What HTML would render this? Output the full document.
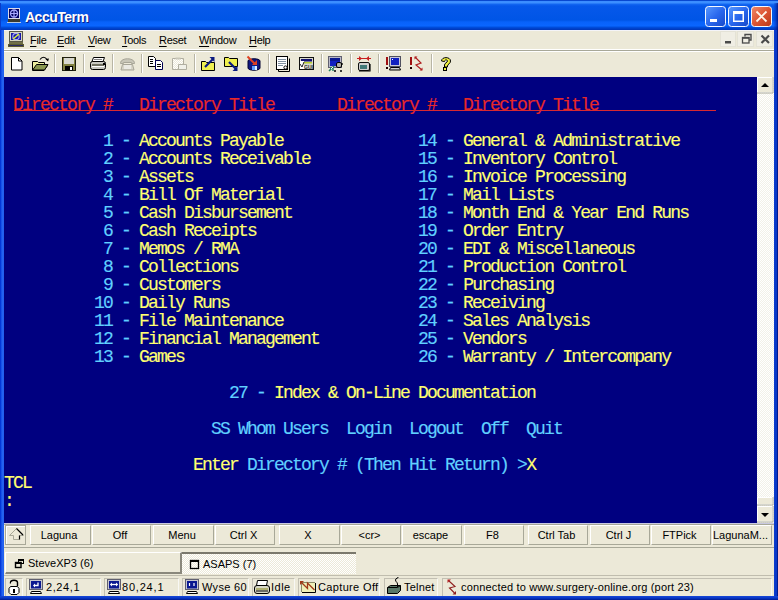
<!DOCTYPE html>
<html><head><meta charset="utf-8">
<style>
*{margin:0;padding:0;box-sizing:border-box}
html,body{width:778px;height:600px;overflow:hidden;background:#0842D6;font-family:"Liberation Sans",sans-serif}
.abs{position:absolute}
#title{left:0;top:0;width:778px;height:30px;background:linear-gradient(#0848D0 0px,#0848D0 1px,#3A8CFF 1px,#3D90FF 3px,#1468F2 4px,#0658EA 6px,#0055E6 20px,#0862FA 22px,#0A66FF 26px,#0050E0 27px,#003DC4 29px,#0036B8 30px)}
#title .t{left:25px;top:9px;color:#fff;font-weight:bold;font-size:14px;text-shadow:1px 1px #0A1E8A;letter-spacing:-0.5px}
#lframe{left:0;top:30px;width:4px;height:570px;background:linear-gradient(90deg,#0030D0,#0840E0 1px,#2563F0 2px,#2060EE 4px)}
#rframe{left:774px;top:30px;width:4px;height:570px;background:linear-gradient(90deg,#1040D0,#0838C8 1px,#0838C8 3px,#001A90 3px)}
#bframe{left:0;top:596px;width:778px;height:4px;background:linear-gradient(#1848D8,#0838C8 2px,#001A90 4px)}
#menubar{left:4px;top:30px;width:770px;height:20px;background:#ECE9D8;border-top:1px solid #F4F4F8;border-bottom:1px solid #fff}
#toolbar{left:4px;top:50px;width:770px;height:27px;background:#ECE9D8;border-top:1px solid #A8A898;box-shadow:inset 0 1px #fff}
#term{left:4px;top:77px;width:753px;height:446px;background:#000080;overflow:hidden}
#scroll{left:757px;top:77px;width:17px;height:446px;background:#F5F4EE}
#fkeys{left:4px;top:523px;width:770px;height:25px;background:#ECE9D8;border-top:1px solid #C8C8E0;box-shadow:inset 0 1px #A8A898}
#tabs{left:4px;top:547px;width:770px;height:29px;background:#ECE9D8;border-top:1px solid #A8A898}
#status{left:4px;top:576px;width:770px;height:20px;background:#ECE9D8}
.row{position:absolute;left:0px;height:18px;font-family:"Liberation Mono",monospace;font-size:18px;letter-spacing:-1.8px;line-height:18px;white-space:pre;color:#FFFF70;-webkit-text-stroke:0.15px currentColor}
.c{color:#60D0FF}.y{color:#FFFF70}.r{color:#E82828}
.menu span{position:absolute;top:3px;font-size:11px;color:#000;font-family:"Liberation Sans",sans-serif;letter-spacing:-0.3px}
.menu u{text-decoration-thickness:1px;text-underline-offset:2px}
.sep{position:absolute;top:3px;width:2px;height:19px;border-left:1px solid #B8B5A5;border-right:1px solid #fff}
.fk{position:absolute;top:1px;height:20px;width:60px;background:#ECE9D8;border:1px solid #A8A898;border-top-color:#fff;border-left-color:#fff;font-size:11px;text-align:center;line-height:18px;color:#000;padding-right:3px;white-space:nowrap}
.sp{position:absolute;top:2px;height:18px;border-left:1px solid #C2BFB2;border-top:1px solid #C2BFB2;border-right:1px solid #F8F8F4}
.sp span{position:absolute;top:2px;font-size:11px;color:#000;white-space:nowrap}
</style></head><body>
<div id="title" class="abs"><div class="t abs">AccuTerm</div></div>
<div id="lframe" class="abs"></div><div class="abs" style="left:774px;top:3px;width:4px;height:27px;background:linear-gradient(90deg,rgba(0,40,180,0.15),rgba(0,30,160,0.45) 2px,rgba(0,10,110,0.75))"></div><div class="abs" style="left:0;top:3px;width:1px;height:27px;background:#0A3CC8"></div><div id="rframe" class="abs"></div><div id="bframe" class="abs"></div>
<div id="menubar" class="abs menu">
<span style="left:26px"><u>F</u>ile</span><span style="left:53px"><u>E</u>dit</span><span style="left:84px"><u>V</u>iew</span><span style="left:118px"><u>T</u>ools</span><span style="left:155px"><u>R</u>eset</span><span style="left:195px"><u>W</u>indow</span><span style="left:245px"><u>H</u>elp</span>
</div>
<div id="toolbar" class="abs">
<div class="sep" style="left:50px"></div><div class="sep" style="left:79px"></div><div class="sep" style="left:108px"></div><div class="sep" style="left:137px"></div><div class="sep" style="left:190px"></div><div class="sep" style="left:264px"></div><div class="sep" style="left:317px"></div><div class="sep" style="left:346px"></div><div class="sep" style="left:374px"></div><div class="sep" style="left:427px"></div>
</div>
<div id="term" class="abs">
<div class="row r" style="top:19px"> Directory #   Directory Title       Directory #   Directory Title</div>
<div class="abs" style="left:10px;top:33px;width:702px;height:1px;background:#D82830"></div>
<div class="row" style="top:55px"><span class="c">           1 - </span>Accounts Payable<span class="c">               14 - </span>General &amp; Administrative</div>
<div class="row" style="top:73px"><span class="c">           2 - </span>Accounts Receivable<span class="c">            15 - </span>Inventory Control</div>
<div class="row" style="top:91px"><span class="c">           3 - </span>Assets<span class="c">                         16 - </span>Invoice Processing</div>
<div class="row" style="top:109px"><span class="c">           4 - </span>Bill Of Material<span class="c">               17 - </span>Mail Lists</div>
<div class="row" style="top:127px"><span class="c">           5 - </span>Cash Disbursement<span class="c">              18 - </span>Month End &amp; Year End Runs</div>
<div class="row" style="top:145px"><span class="c">           6 - </span>Cash Receipts<span class="c">                  19 - </span>Order Entry</div>
<div class="row" style="top:163px"><span class="c">           7 - </span>Memos / RMA<span class="c">                    20 - </span>EDI &amp; Miscellaneous</div>
<div class="row" style="top:181px"><span class="c">           8 - </span>Collections<span class="c">                    21 - </span>Production Control</div>
<div class="row" style="top:199px"><span class="c">           9 - </span>Customers<span class="c">                      22 - </span>Purchasing</div>
<div class="row" style="top:217px"><span class="c">          10 - </span>Daily Runs<span class="c">                     23 - </span>Receiving</div>
<div class="row" style="top:235px"><span class="c">          11 - </span>File Maintenance<span class="c">               24 - </span>Sales Analysis</div>
<div class="row" style="top:253px"><span class="c">          12 - </span>Financial Management<span class="c">           25 - </span>Vendors</div>
<div class="row" style="top:271px"><span class="c">          13 - </span>Games<span class="c">                          26 - </span>Warranty / Intercompany</div>
<div class="row" style="top:307px"><span class="c">                         27 - </span>Index &amp; On-Line Documentation</div>
<div class="row c" style="top:343px">                       SS Whom Users  Login  Logout  Off  Quit</div>
<div class="row" style="top:379px">                     Enter <span class="c">Directory # (Then Hit Return) &gt;</span>X</div>
<div class="row" style="top:397px">TCL</div>
<div class="row" style="top:415px">:</div>
</div>
<div id="fkeys" class="abs">
<div class="fk" style="left:1px;width:21px;border-color:#A8A898;box-shadow:inset 1px 1px #fff"></div>
<div class="fk" style="left:26px;width:61px">Laguna</div><div class="fk" style="left:88px;width:59px">Off</div><div class="fk" style="left:149px;width:61px">Menu</div><div class="fk" style="left:211px;width:60px">Ctrl X</div><div class="fk" style="left:275px;width:61px">X</div><div class="fk" style="left:337px;width:60px">&lt;cr&gt;</div><div class="fk" style="left:398px;width:60px">escape</div><div class="fk" style="left:460px;width:60px">F8</div><div class="fk" style="left:524px;width:60px">Ctrl Tab</div><div class="fk" style="left:586px;width:60px">Ctrl J</div><div class="fk" style="left:647px;width:60px">FTPick</div><div class="fk" style="left:708px;width:60px">LagunaM...</div>
</div>
<div id="tabs" class="abs">
<div class="abs" style="left:1px;top:4px;width:177px;height:22px;border-top:1px solid #fff;border-left:1px solid #fff;border-right:2px solid #8A887C;border-bottom:2px solid #8A887C;background:#ECE9D8"></div>
<div class="abs" style="left:178px;top:4px;width:174px;height:22px;border-top:2px solid #7A786C;"><svg width="174" height="20" style="display:block"><rect width="174" height="20" fill="url(#dith)"/></svg></div>
<div class="abs" style="left:24px;top:9px;font-size:11px;color:#000;white-space:nowrap">SteveXP3 (6)</div>
<div class="abs" style="left:199px;top:10px;font-size:11px;color:#000;white-space:nowrap">ASAPS (7)</div>
</div>
<div class="abs" style="left:4px;top:575px;width:770px;height:1px;background:#C0BDAE"></div>
<div id="status" class="abs">
<div class="sp" style="left:1px;width:18px"></div>
<div class="sp" style="left:22px;width:75px"><span style="left:19px;letter-spacing:0.6px">2,24,1</span></div>
<div class="sp" style="left:100px;width:75px"><span style="left:17px;letter-spacing:0.8px">80,24,1</span></div>
<div class="sp" style="left:178px;width:67px"><span style="left:19px;letter-spacing:0.3px">Wyse 60</span></div>
<div class="sp" style="left:248px;width:43px"><span style="left:18px;letter-spacing:0.5px">Idle</span></div>
<div class="sp" style="left:294px;width:82px"><span style="left:19px;letter-spacing:0.35px">Capture Off</span></div>
<div class="sp" style="left:380px;width:54px"><span style="left:19px;letter-spacing:0.2px">Telnet</span></div>
<div class="sp" style="left:438px;width:330px"><span style="left:18px;letter-spacing:0.16px">connected to www.surgery-online.org (port 23)</span></div>
</div>
<svg class="abs" style="left:0;top:0" width="778" height="600" viewBox="0 0 778 600">
<defs>
<linearGradient id="gb" x1="0" y1="0" x2="1" y2="1"><stop offset="0" stop-color="#5A9AFF"/><stop offset="0.5" stop-color="#2A68EE"/><stop offset="1" stop-color="#1648C8"/></linearGradient>
<linearGradient id="gr" x1="0" y1="0" x2="1" y2="1"><stop offset="0" stop-color="#F08A6A"/><stop offset="0.5" stop-color="#DD5533"/><stop offset="1" stop-color="#B83818"/></linearGradient>
<pattern id="dith" width="2" height="2" patternUnits="userSpaceOnUse"><rect width="2" height="2" fill="#ECE9D8"/><rect width="1" height="1" fill="#FFFFFF"/><rect x="1" y="1" width="1" height="1" fill="#FFFFFF"/></pattern>
<pattern id="dith2" width="2" height="2" patternUnits="userSpaceOnUse"><rect width="2" height="2" fill="#F2F1E8"/><rect width="1" height="1" fill="#FFFFFF"/><rect x="1" y="1" width="1" height="1" fill="#FFFFFF"/></pattern>
</defs>
<!-- title buttons -->
<rect x="705.5" y="6.5" width="20" height="20" rx="3" fill="url(#gb)" stroke="#F4F8FF"/>
<rect x="710" y="19" width="7" height="3" fill="#fff"/>
<rect x="728.5" y="6.5" width="20" height="20" rx="3" fill="url(#gb)" stroke="#F4F8FF"/>
<path d="M733 11h11v11h-11z M734.5 14h8v6.5h-8z" fill="#fff" fill-rule="evenodd"/>
<rect x="751.5" y="6.5" width="20" height="20" rx="3" fill="url(#gr)" stroke="#F4F8FF"/>
<path d="M756.5 11.5l10 10M766.5 11.5l-10 10" stroke="#FFF4E8" stroke-width="1.8"/>
<!-- title icon -->
<rect x="8" y="8" width="12" height="11" fill="#D8D8E8"/>
<rect x="9" y="9" width="10" height="9" fill="#000060"/>
<circle cx="14" cy="13.5" r="3.5" fill="none" stroke="#A8A8FF" stroke-width="1.3"/>
<path d="M14 10v7M10.5 13.5h7" stroke="#A8A8FF" stroke-width="1.2"/>
<rect x="8" y="19" width="12" height="3" fill="#3A3A30"/>
<rect x="7" y="22" width="14" height="1" fill="#B8C8E0"/>
<!-- menu icon -->
<rect x="9" y="31" width="14" height="11" fill="#5A5A48"/>
<rect x="10" y="32" width="12" height="9" fill="#D8D8C0"/>
<rect x="11" y="33" width="10" height="7" fill="#1818A8"/>
<circle cx="16" cy="36.5" r="3.2" fill="none" stroke="#A8A8F0" stroke-width="1.2"/>
<path d="M13 39l6-5" stroke="#D8F040" stroke-width="1.6"/>
<rect x="9" y="42" width="14" height="2" fill="#707048"/>
<rect x="8" y="44" width="16" height="3" fill="#5A5A30"/><rect x="9" y="45" width="14" height="1" fill="#2A2A60"/>
<!-- MDI buttons -->
<rect x="720.5" y="31.5" width="15" height="15" fill="#F0EEE4" stroke="#E4E2D6"/>
<rect x="737.5" y="31.5" width="16" height="15" fill="#F0EEE4" stroke="#E4E2D6"/>
<rect x="756.5" y="31.5" width="16" height="15" fill="#F0EEE4" stroke="#E4E2D6"/>
<rect x="725" y="41" width="6" height="2.5" fill="#4A4A4A"/>
<path d="M745 36.5V34.5h6v5.5h-2" stroke="#4A4A4A" stroke-width="1.4" fill="none"/>
<rect x="742.5" y="37.5" width="6.5" height="5.5" fill="#F0EEE4" stroke="#4A4A4A" stroke-width="1.3"/><rect x="742" y="37" width="7.5" height="1.8" fill="#4A4A4A"/>
<path d="M761.5 35.5l7.5 7.5M769 35.5l-7.5 7.5" stroke="#4A4A4A" stroke-width="2.2"/>
<!-- scrollbar -->
<rect x="757" y="77" width="17" height="446" fill="url(#dith2)"/>
<rect x="757.5" y="77.5" width="15" height="15" fill="#ECE9D8" stroke="#fff"/><path d="M757 93h16V77" fill="none" stroke="#A8A898"/>
<path d="M761 87h8l-4-4z" fill="#000"/>
<rect x="757.5" y="497.5" width="15" height="7" fill="#ECE9D8" stroke="#fff"/><path d="M757 505h16V497" fill="none" stroke="#A8A898"/>
<rect x="757.5" y="506.5" width="15" height="15" fill="#ECE9D8" stroke="#fff"/><path d="M757 522h16V506" fill="none" stroke="#A8A898"/>
<path d="M761 513h8l-4 4z" fill="#000"/>
<!-- shift icon -->
<path d="M9.5 535.5l7-7 7 7h-4v4h-6v-4z" fill="#ECE9D8" stroke="#A8A898"/><path d="M16.5 528.5l6.5 6.5M19.5 535.5v4" stroke="#000" stroke-width="1.2"/>
<!-- tab icons -->
<rect x="18.5" y="559.5" width="5" height="4" fill="none" stroke="#000"/><rect x="18" y="559" width="6" height="2" fill="#000"/>
<rect x="15.5" y="562.5" width="5.5" height="5" fill="#ECE9D8" stroke="#000" stroke-width="1.4"/><rect x="15" y="562" width="6.5" height="2" fill="#000"/>
<rect x="190.5" y="560.5" width="8" height="8" fill="none" stroke="#000" stroke-width="1.3"/><rect x="190" y="560" width="9" height="2" fill="#000"/>
<!-- status icons -->
<path d="M10.5 583.5v-1c0-3 7-3 7 0v3.5" fill="none" stroke="#000" stroke-width="1.4"/><path d="M11 583h1" stroke="#fff"/>
<path d="M10.5 586.5h7l1.5 2v4l-2 2h-6l-2-2v-4z" fill="#fff" stroke="#000"/><path d="M13 589h2v4h-2z" fill="#000"/>
<rect x="29.5" y="579.5" width="13" height="10" fill="#C8C8D0" stroke="#606070"/><rect x="31" y="581" width="10" height="7.5" fill="#0A1890"/><path d="M38 582.5v3h-4" fill="none" stroke="#fff" stroke-width="1.3"/><path d="M35 583.5l-2 2 2 2z" fill="#fff"/>
<path d="M31.5 591.5h9l1 2h-11z" fill="#fff" stroke="#000"/>
<rect x="107.5" y="579.5" width="13" height="10" fill="#C8C8D0" stroke="#606070"/><rect x="109" y="581" width="10" height="7.5" fill="#0A1890"/><path d="M110.5 584.5h7" stroke="#fff" stroke-width="1.3"/><path d="M112 582.5l-2 2 2 2zM116 582.5l2 2-2 2z" fill="#fff"/>
<path d="M109.5 591.5h9l1 2h-11z" fill="#fff" stroke="#000"/>
<rect x="185.5" y="579.5" width="13" height="10" fill="#C8C8D0" stroke="#606070"/><rect x="187" y="581" width="10" height="7.5" fill="#0A1890"/><path d="M189.5 583v3M194 583v3" stroke="#fff" stroke-width="1.2"/>
<path d="M187.5 591.5h9l1 2h-11z" fill="#fff" stroke="#000"/>
<path d="M257.5 580.5h10l-1 5h-10z" fill="#fff" stroke="#000"/><rect x="254.5" y="585.5" width="15" height="8" rx="2.5" fill="#D8D8C8" stroke="#000"/><rect x="256" y="588" width="12" height="2" fill="#B0B070"/><rect x="256" y="590.5" width="12" height="1" fill="#000"/>
<rect x="302" y="583" width="13" height="9" fill="#F0F0B8"/><path d="M301.5 592V582.5H315" stroke="#8A8A68" fill="none"/><path d="M315.5 583v9.5H302" stroke="#000" fill="none"/><path d="M302 583l5.5 5.5v-5.5l7 7" fill="none" stroke="#A03818" stroke-width="1.3"/><path d="M300 581h4l-4 4z" fill="#A03818"/>
<path d="M387.5 587.5l3-2h10v5l-3 3h-10z" fill="#587868" stroke="#000"/><path d="M387.5 587.5h10l3-2" fill="none" stroke="#000"/><path d="M397.5 587v-3c0-2-2-2-2-4s3-2 3-3" fill="none" stroke="#000"/>
<path d="M449 581l6 5.5-5.5 1.5 5 5" fill="none" stroke="#902020" stroke-width="1.1"/><path d="M447.5 579.5h3.5l-3.5 3.5z" fill="#B02020"/><path d="M456 594.5h-3.5l3.5-3.5z" fill="#902020"/>
<!-- toolbar icons -->
<path d="M11.5 57.5h7l3.5 3.5v9h-10.5z" fill="#fff" stroke="#000"/><path d="M18.5 57.5v3.5h3.5" fill="none" stroke="#000"/>
<path d="M32.5 61.5h5l1 1h6v3h3l-3.5 5h-11.5z" fill="#EEF0A0" stroke="#000"/><path d="M33 69.5l3.5-5h11.5l-3.5 5.5h-11.5z" fill="#8A9850" stroke="#000"/>
<path d="M40 59.5c2-3 5-3 7 0" fill="none" stroke="#000" stroke-width="1.2"/><path d="M45.5 59l2.5 2.5 1-3z" fill="#000"/>
<rect x="62.5" y="57.5" width="13" height="13" fill="#808040" stroke="#202010"/><rect x="64" y="58" width="10" height="6" fill="#D8D8D0"/><rect x="65" y="66" width="8" height="4.5" fill="#000"/><rect x="70" y="67" width="2" height="3" fill="#fff"/>
<path d="M93.5 57.5h11l-1.5 4h-11z" fill="#fff" stroke="#000"/><path d="M94 59.5h8" stroke="#808080"/><rect x="90.5" y="61.5" width="15" height="8" rx="2" fill="#C8C8C0" stroke="#000"/><rect x="92" y="64" width="12" height="2" fill="#707060"/><rect x="92" y="66" width="12" height="1" fill="#fff"/><rect x="103" y="63" width="2" height="2" fill="#000"/>
<path d="M120.5 62.5c1-5 13-5 14 0v1h-3v-1h-8v1h-3z" fill="#C8C6B8" stroke="#A8A698"/><path d="M122.5 64.5h10l1.5 5.5h-13z" fill="#D8D6C8" stroke="#A8A698"/><path d="M124 66h7M124 68h7" stroke="#fff"/>
<path d="M148.5 56.5h5l2 2v8h-7z" fill="#fff" stroke="#000"/><path d="M155.5 60.5h5l2 2v7h-7z" fill="#fff" stroke="#000050"/><path d="M150 59.5h3M150 61.5h3M150 63.5h3M157 64.5h4M157 66.5h4" stroke="#000"/>
<path d="M172.5 58.5h11v11h-11z" fill="url(#dith)" stroke="#B0AEA0"/><path d="M178.5 64.5h8v5h-8z" fill="#F0F0E8" stroke="#B0AEA0"/><path d="M175.5 57.5h5v2h-5z" fill="#C8C6B8"/>
<path d="M201.5 61.5h4l1 1h8v8h-13z" fill="#F0F050" stroke="#000"/><path d="M205 67l8-8" stroke="#0A1A80" stroke-width="2.2"/><path d="M209.5 57h5v5z" fill="#0A1A80"/>
<path d="M224.5 57.5h4l1 1h8v8h-13z" fill="#F0F050" stroke="#000"/><path d="M229 62l7 7" stroke="#0A1A80" stroke-width="2.2"/><path d="M232.5 71h5v-5z" fill="#0A1A80"/>
<path d="M248 61c0-3 12-3 12 0v7c0 3-12 3-12 0z" fill="#101880" stroke="#000030"/><rect x="252" y="66" width="3" height="4" fill="#60A0FF"/><rect x="255" y="66" width="2" height="4" fill="#E0F0FF"/>
<path d="M247.5 56.5l7 7" stroke="#E04020" stroke-width="2"/><path d="M252 65h5v-5z" fill="#E04020"/>
<path d="M278.5 58.5v13h11v-13" fill="none" stroke="#000"/><rect x="276.5" y="56.5" width="11" height="13" fill="#fff" stroke="#000"/><path d="M278 59.5h8M278 61.5h8M278 63.5h8M278 65.5h5" stroke="#8090A0"/><circle cx="285.5" cy="67.5" r="1.6" fill="#fff" stroke="#000"/>
<rect x="299.5" y="57.5" width="14" height="12" fill="#D8D8D0" stroke="#101010"/><rect x="301" y="59" width="11" height="2.5" fill="#101070"/><rect x="304" y="62" width="8" height="1.5" fill="#B8D030"/><rect x="300" y="61" width="4" height="8" fill="#fff"/><path d="M300 64l2 3 2-5" fill="none" stroke="#202020"/><text x="304" y="69.3" font-size="6" font-weight="bold" fill="#303030" font-family="Liberation Sans" textLength="9" lengthAdjust="spacingAndGlyphs">GUI</text>
<rect x="328.5" y="56.5" width="13" height="11" fill="#B8B8C8" stroke="#606070"/><rect x="330" y="58" width="10" height="8" fill="#1020C0"/><rect x="330" y="58" width="10" height="3" fill="#0A1890"/><path d="M329 71l5-5M330 68h3v3" stroke="#208060" stroke-width="1.5" fill="none"/><path d="M331 69l2-2" stroke="#fff"/><rect x="336.5" y="62.5" width="5" height="5" rx="1.5" fill="#B0B0A8" stroke="#000"/><path d="M334 71h2M340 71h2M342 63v2" stroke="#000" stroke-width="1.3"/>
<path d="M357 58.5h14" stroke="#C82020"/><path d="M359 56l3 2.5-3 2.5zM369 56l-3 2.5 3 2.5z" fill="#C82020"/><rect x="358.5" y="62.5" width="11" height="8" rx="1.5" fill="#D0D0D0" stroke="#101010"/><rect x="360" y="65" width="7" height="4" fill="#407878"/><path d="M370 64v7h-11" stroke="#000" stroke-width="1.2" fill="none"/>
<rect x="386" y="57" width="2" height="8" fill="#A01010"/><rect x="386" y="67" width="2" height="2" fill="#200000"/><rect x="389.5" y="56.5" width="11" height="10" fill="#C8C8D8" stroke="#505060"/><rect x="391" y="58" width="8" height="7" fill="#1020C0"/><rect x="392" y="59" width="1" height="1" fill="#fff"/><path d="M390.5 67.5h9l1 2.5h-11z" fill="#D0D0D0" stroke="#000"/>
<rect x="410" y="57" width="2" height="8" fill="#A01010"/><rect x="410" y="67" width="2" height="2" fill="#200000"/><path d="M415 57l6 6-5 2 6 5" fill="none" stroke="#B02020" stroke-width="1.2"/><path d="M414.5 56.5h3l-3 3zM422.5 70.5h-3l3-3z" fill="#B02020"/>
<path d="M441.5 61c0-4.5 9-4.5 9 0 0 3-3 3-3 5v1h-3v-2c0-2 3-2.5 3-4 0-1.5-3-1.5-3 0.5z" fill="#F0F040" stroke="#000"/><rect x="443.5" y="67.5" width="3" height="3" fill="#F0F040" stroke="#000"/>
</svg>
</body></html>
